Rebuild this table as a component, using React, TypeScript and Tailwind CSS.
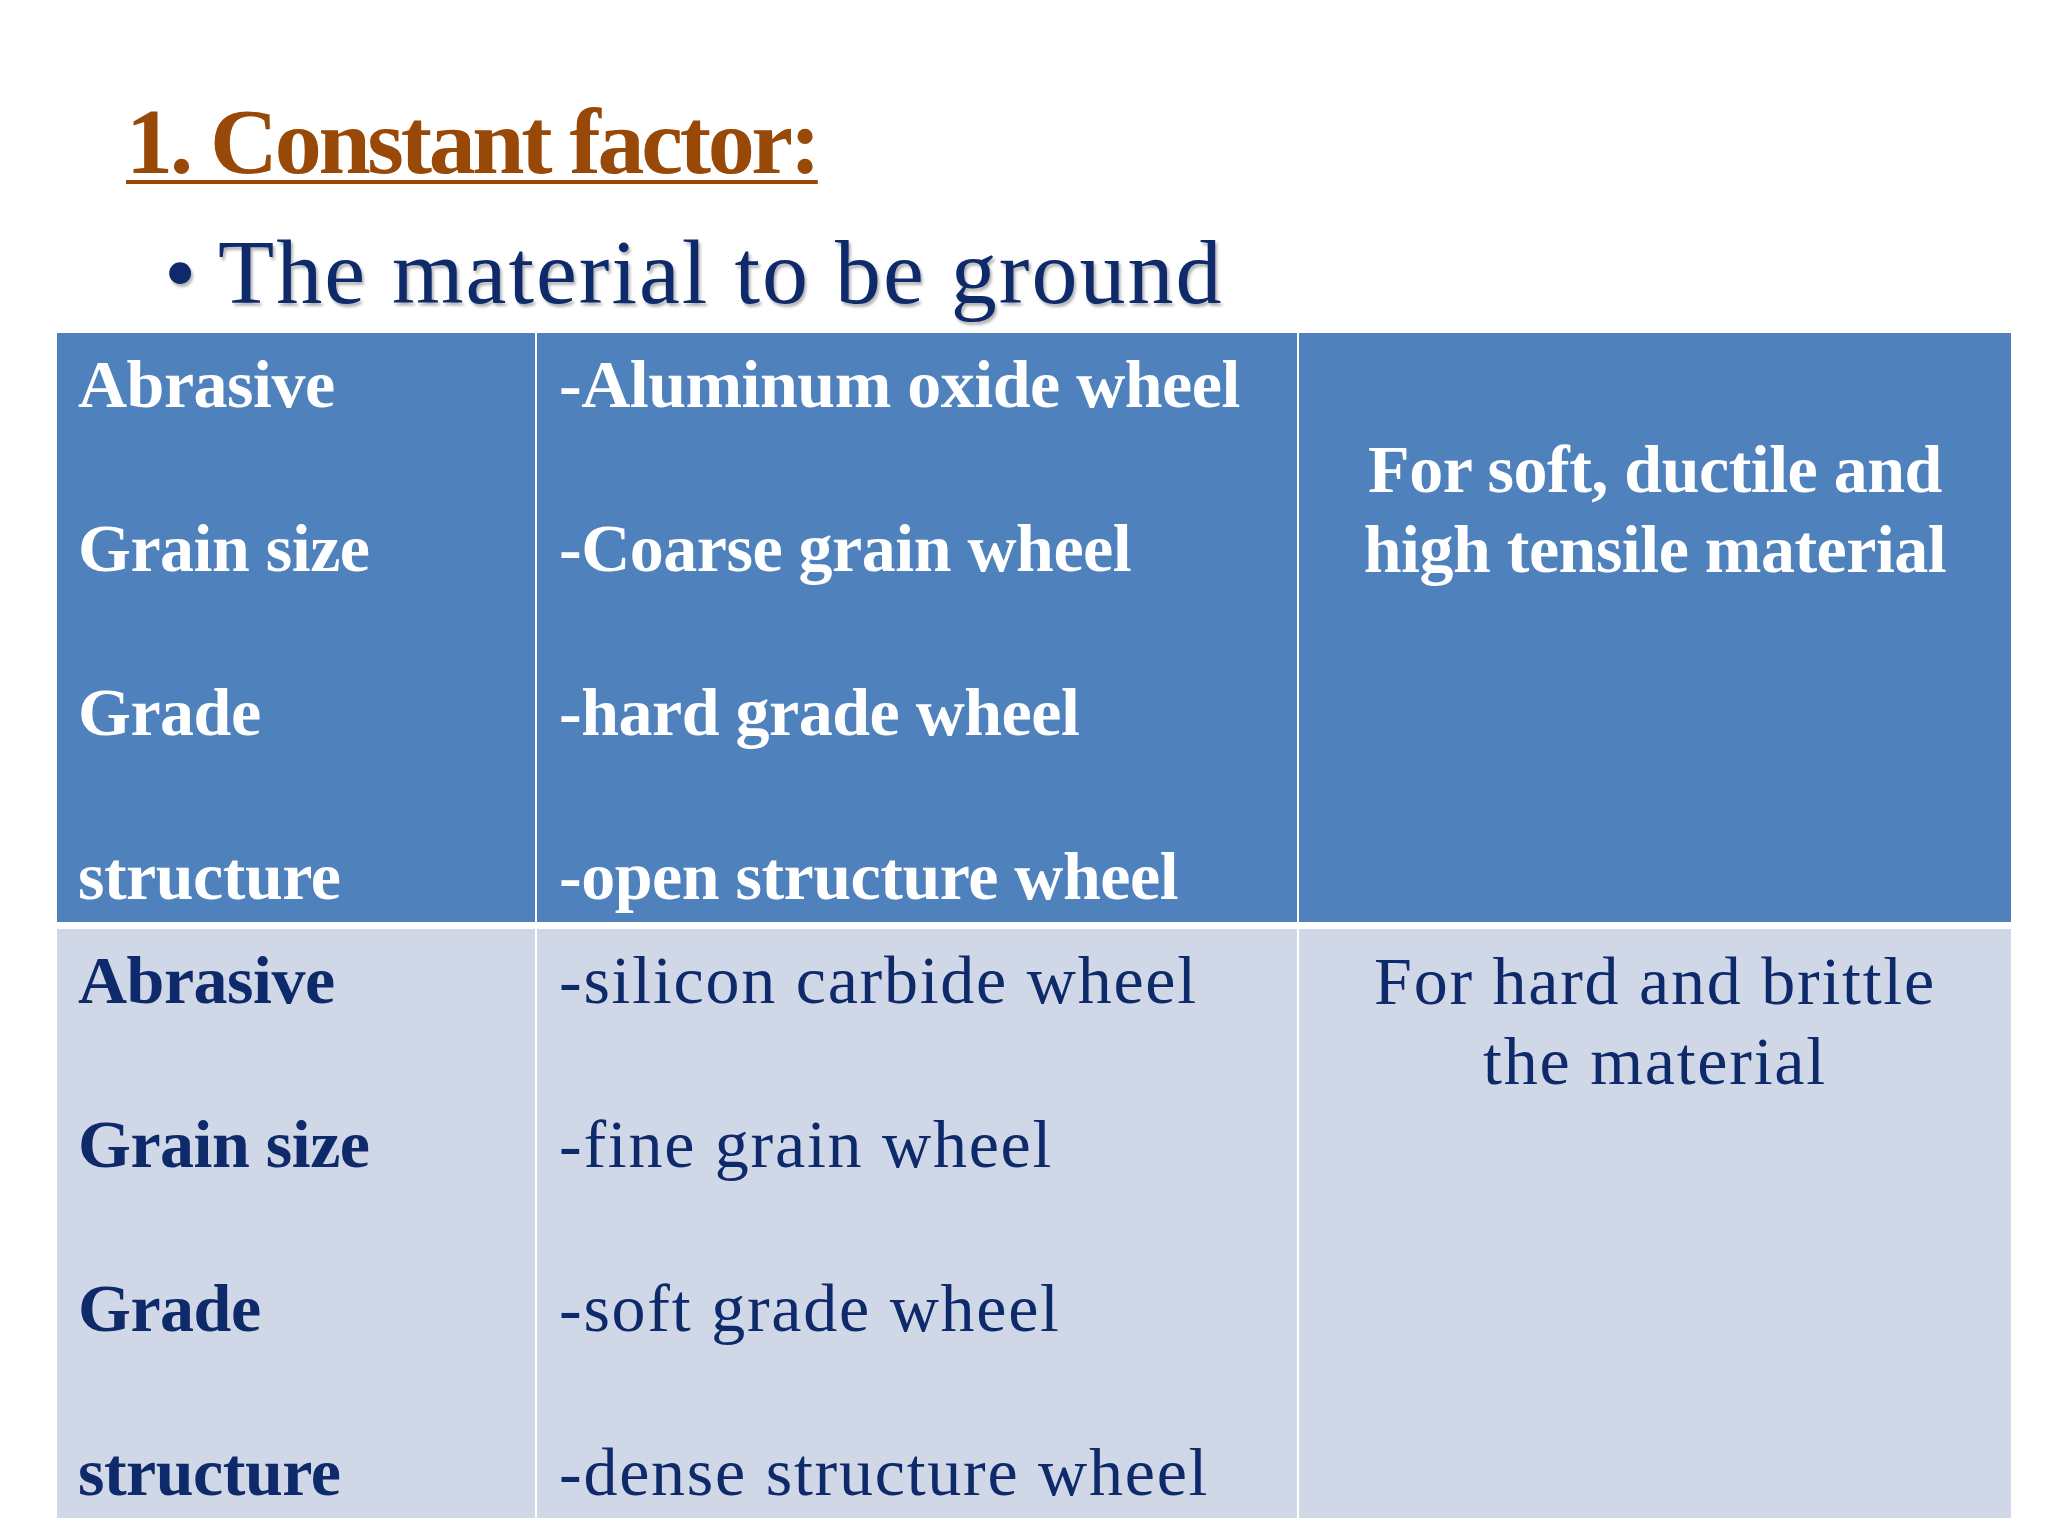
import React from "react";

const serif = "font-['Liberation_Serif','Times_New_Roman',serif]";

function Lines({ lines }: { lines: string[] }) {
  return (
    <div>
      {lines.map((l, i) => (
        <div key={i} className="h-[82px] leading-[82px] whitespace-nowrap">
          {l || "\u00a0"}
        </div>
      ))}
    </div>
  );
}

export default function App() {
  const regular = "font-normal tracking-[1.75px]";
  const bold = "font-bold tracking-[-0.5px]";
  return (
    <div className={`w-[2048px] h-[1536px] bg-white overflow-hidden ${serif}`}>
      <div className="pt-[94px] pl-[126px]">
        <div className="text-[94px] leading-[94px] h-[94px] font-bold tracking-[-3.3px] text-[#984807] underline decoration-[4px] underline-offset-[7px] whitespace-nowrap">
          1. Constant factor:
        </div>
      </div>
      <div className="mt-[38px] pl-[164px] flex items-start text-[#0f2a6b] [text-shadow:2px_3px_3px_rgba(0,0,0,0.3)]">
        <span className="text-[92px] leading-[92px] h-[92px] w-[54px]">•</span>
        <span className="text-[92px] leading-[92px] h-[92px] tracking-[2px] whitespace-nowrap">
          The material to be ground
        </span>
      </div>
      <div className="mt-[15px] ml-[57px] grid grid-cols-[478px_760px_712px] grid-rows-[589px_589px] gap-x-[2px] gap-y-[7px] bg-white text-[68px]">
        <div className={`bg-[#4f81bd] text-white pl-[21px] pt-[10px] ${bold}`}>
          <Lines lines={["Abrasive", "", "Grain size", "", "Grade", "", "structure"]} />
        </div>
        <div className={`bg-[#4f81bd] text-white pl-[22px] pt-[10px] ${bold}`}>
          <Lines
            lines={[
              "-Aluminum oxide wheel",
              "",
              "-Coarse grain wheel",
              "",
              "-hard grade wheel",
              "",
              "-open structure wheel",
            ]}
          />
        </div>
        <div className={`bg-[#4f81bd] text-white pt-[96px] text-center ${bold}`}>
          <div className="leading-[80px]">
            For soft, ductile and
            <br />
            high tensile material
          </div>
        </div>
        <div className={`bg-[#d0d8e8] text-[#0f2a6b] pl-[21px] pt-[10px] ${bold}`}>
          <Lines lines={["Abrasive", "", "Grain size", "", "Grade", "", "structure"]} />
        </div>
        <div className={`bg-[#d0d8e8] text-[#0f2a6b] pl-[22px] pt-[10px] ${regular}`}>
          <Lines
            lines={[
              "-silicon carbide wheel",
              "",
              "-fine grain wheel",
              "",
              "-soft grade wheel",
              "",
              "-dense structure wheel",
            ]}
          />
        </div>
        <div className={`bg-[#d0d8e8] text-[#0f2a6b] pt-[12px] text-center ${regular}`}>
          <div className="leading-[80px]">
            For hard and brittle
            <br />
            the material
          </div>
        </div>
      </div>
    </div>
  );
}
